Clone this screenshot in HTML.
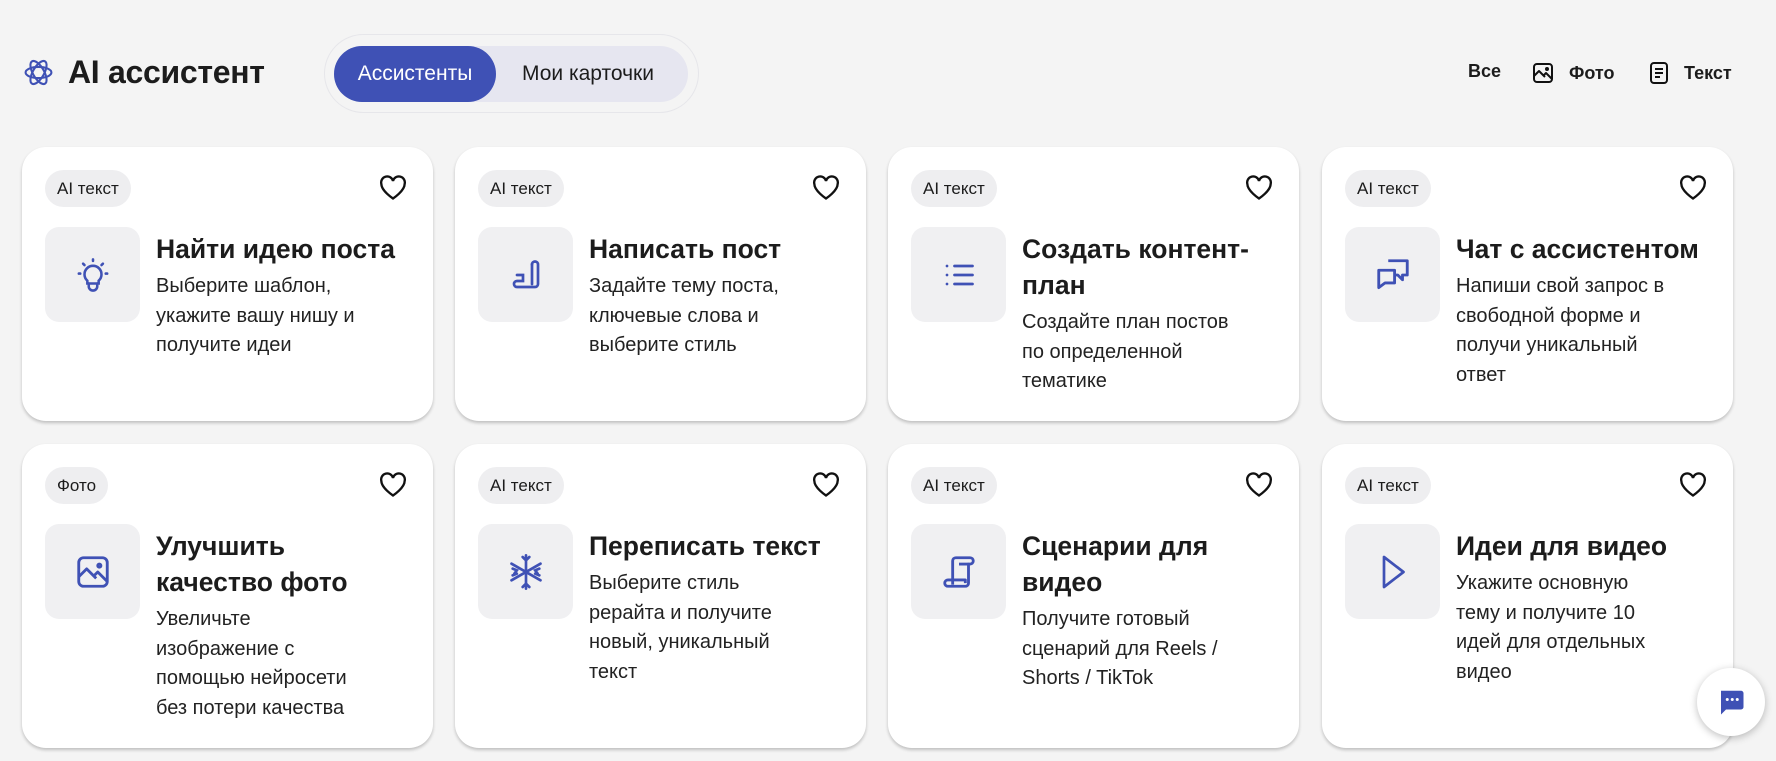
<!DOCTYPE html>
<html><head><meta charset="utf-8"><style>
*{box-sizing:border-box;margin:0;padding:0}
body{width:1776px;height:761px;background:#f4f4f4;font-family:"Liberation Sans",Roboto,sans-serif;color:#1c1c1c;overflow:hidden;position:relative}
.logo{position:absolute;left:23px;top:57px}
.h1{position:absolute;left:68px;top:54px;font-size:32px;font-weight:600;letter-spacing:-0.3px}
.tog{position:absolute;left:324px;top:34px;width:375px;height:79px;border-radius:40px;border:1px solid #e6e6ea;background:#f4f4f4}
.pill{position:absolute;left:334px;top:46px;width:354px;height:56px;border-radius:28px;background:#e6e6f0;font-size:21px}
.pill .a{position:absolute;left:0;top:0;width:162px;height:56px;border-radius:28px;background:#3f51b5;color:#fff;text-align:center;line-height:56px}
.pill .b{position:absolute;left:188px;top:0;line-height:56px;color:#1c1c1c}
.flt{position:absolute;top:61px;font-size:18px;font-weight:700;display:flex;align-items:center}
.card{position:absolute;width:411px;height:274px;background:#fff;border-radius:24px;box-shadow:0 2px 3px rgba(0,0,0,.22)}
.tag{position:absolute;left:23px;top:23px;height:37px;padding:0 12px;border-radius:19px;background:#eeeef0;font-size:17px;line-height:37px}
.heart{position:absolute;right:26px;top:28px}
.ib{position:absolute;left:23px;top:80px;width:95px;height:95px;border-radius:14px;background:#f0f0f2;display:flex;align-items:center;justify-content:center}
.tx{position:absolute;left:134px;top:84px;width:260px}
.tt{font-size:26.5px;font-weight:600;line-height:36px;margin-bottom:5px}
.ds{font-size:20px;line-height:29.5px;color:#222;white-space:nowrap}
.chat{position:absolute;left:1697px;top:668px;width:68px;height:68px;border-radius:50%;background:#fff;box-shadow:0 2px 8px rgba(0,0,0,.25);display:flex;align-items:center;justify-content:center}
</style></head><body>
<svg class="logo" width="31" height="31" viewBox="0 0 24 24" fill="none" stroke="#3f51b5" stroke-width="1.6"><ellipse cx="12" cy="12" rx="10" ry="4.3"/><ellipse cx="12" cy="12" rx="10" ry="4.3" transform="rotate(60 12 12)"/><ellipse cx="12" cy="12" rx="10" ry="4.3" transform="rotate(120 12 12)"/></svg>
<div class="h1">AI ассистент</div>
<div class="tog"></div>
<div class="pill"><div class="a">Ассистенты</div><div class="b">Мои карточки</div></div>
<div class="flt" style="left:1468px">Все</div>
<div class="flt" style="left:1531px"><svg width="24" height="24" viewBox="0 0 24 24" fill="none" stroke="#111" stroke-width="2" stroke-linejoin="round"><rect x="3" y="3" width="18" height="18" rx="3"/><path d="M3 15l5-5 6 6M13 14l2-2 6 6"/><circle cx="16" cy="8" r="1" fill="#111"/></svg><span style="margin-left:14px">Фото</span></div>
<div class="flt" style="left:1648px"><svg width="22" height="24" viewBox="0 0 22 24" fill="none" stroke="#111" stroke-width="2"><rect x="3" y="2" width="16" height="20" rx="3"/><path d="M7 8h8M7 12h8M7 16h5"/></svg><span style="margin-left:14px">Текст</span></div>

<div class="card" style="left:22px;top:147px"><div class="tag">AI текст</div>
<svg class="heart" width="28" height="26" viewBox="0 0 24 22" fill="none" stroke="#111" stroke-width="2"><path d="M12 20S2 13.5 2 7.5A5 5 0 0 1 12 5a5 5 0 0 1 10 2.5C22 13.5 12 20 12 20z"/></svg>
<div class="ib"><svg width="34" height="38" viewBox="0 0 24 26" fill="none" stroke="#3f51b5" stroke-width="1.8" stroke-linecap="round"><path d="M12 2v1M5 5l1 1M19 5l-1 1M2 12h1M21 12h1"/><path d="M8 17a6 6 0 1 1 8 0v2H8z"/><path d="M9 19v2a3 3 0 0 0 6 0v-2"/></svg></div>
<div class="tx"><div class="tt">Найти идею поста</div><div class="ds">Выберите шаблон,<br>укажите вашу нишу и<br>получите идеи</div></div></div>

<div class="card" style="left:455px;top:147px"><div class="tag">AI текст</div>
<svg class="heart" width="28" height="26" viewBox="0 0 24 22" fill="none" stroke="#111" stroke-width="2"><path d="M12 20S2 13.5 2 7.5A5 5 0 0 1 12 5a5 5 0 0 1 10 2.5C22 13.5 12 20 12 20z"/></svg>
<div class="ib"><svg width="36" height="36" viewBox="0 0 24 24" fill="none" stroke="#3f51b5" stroke-width="1.8" stroke-linecap="round"><path d="M16 5a2 2 0 0 1 4 0v13a2 2 0 0 1-2 2H6a2 2 0 0 1 0-4h4v-4H6"/><path d="M16 5v13"/></svg></div>
<div class="tx"><div class="tt">Написать пост</div><div class="ds">Задайте тему поста,<br>ключевые слова и<br>выберите стиль</div></div></div>

<div class="card" style="left:888px;top:147px"><div class="tag">AI текст</div>
<svg class="heart" width="28" height="26" viewBox="0 0 24 22" fill="none" stroke="#111" stroke-width="2"><path d="M12 20S2 13.5 2 7.5A5 5 0 0 1 12 5a5 5 0 0 1 10 2.5C22 13.5 12 20 12 20z"/></svg>
<div class="ib"><svg width="36" height="36" viewBox="0 0 24 24" fill="none" stroke="#3f51b5" stroke-width="1.8" stroke-linecap="round"><path d="M9 6h12M9 12h12M9 18h12"/><path d="M4 6h.01M4 12h.01M4 18h.01"/></svg></div>
<div class="tx"><div class="tt">Создать контент-<br>план</div><div class="ds">Создайте план постов<br>по определенной<br>тематике</div></div></div>

<div class="card" style="left:1322px;top:147px"><div class="tag">AI текст</div>
<svg class="heart" width="28" height="26" viewBox="0 0 24 22" fill="none" stroke="#111" stroke-width="2"><path d="M12 20S2 13.5 2 7.5A5 5 0 0 1 12 5a5 5 0 0 1 10 2.5C22 13.5 12 20 12 20z"/></svg>
<div class="ib"><svg width="38" height="38" viewBox="0 0 24 24" fill="none" stroke="#3f51b5" stroke-width="1.8" stroke-linejoin="round"><path d="M9 3h12v9h-3v3l-3-3h-2"/><path d="M3 9h10v8H7l-4 3z"/></svg></div>
<div class="tx"><div class="tt">Чат с ассистентом</div><div class="ds">Напиши свой запрос в<br>свободной форме и<br>получи уникальный<br>ответ</div></div></div>

<div class="card" style="left:22px;top:444px;height:304px"><div class="tag">Фото</div>
<svg class="heart" width="28" height="26" viewBox="0 0 24 22" fill="none" stroke="#111" stroke-width="2"><path d="M12 20S2 13.5 2 7.5A5 5 0 0 1 12 5a5 5 0 0 1 10 2.5C22 13.5 12 20 12 20z"/></svg>
<div class="ib"><svg width="38" height="38" viewBox="0 0 24 24" fill="none" stroke="#3f51b5" stroke-width="1.8" stroke-linejoin="round"><rect x="3" y="3" width="18" height="18" rx="3"/><path d="M3 15l5-5 6 6M13 14l2-2 6 6"/><circle cx="16" cy="8" r="1"/></svg></div>
<div class="tx"><div class="tt">Улучшить<br>качество фото</div><div class="ds">Увеличьте<br>изображение с<br>помощью нейросети<br>без потери качества</div></div></div>

<div class="card" style="left:455px;top:444px;height:304px"><div class="tag">AI текст</div>
<svg class="heart" width="28" height="26" viewBox="0 0 24 22" fill="none" stroke="#111" stroke-width="2"><path d="M12 20S2 13.5 2 7.5A5 5 0 0 1 12 5a5 5 0 0 1 10 2.5C22 13.5 12 20 12 20z"/></svg>
<div class="ib"><svg width="40" height="40" viewBox="0 0 24 24" fill="none" stroke="#3f51b5" stroke-width="1.6" stroke-linecap="round"><path d="M12 2v20M3.3 7l17.4 10M3.3 17l17.4-10M10 3l2 2 2-2M10 21l2-2 2 2M4 10l2.5 1L5 13M20 10l-2.5 1 1.5 2M4 14l2.5-1M20 14l-2.5-1"/></svg></div>
<div class="tx"><div class="tt">Переписать текст</div><div class="ds">Выберите стиль<br>рерайта и получите<br>новый, уникальный<br>текст</div></div></div>

<div class="card" style="left:888px;top:444px;height:304px"><div class="tag">AI текст</div>
<svg class="heart" width="28" height="26" viewBox="0 0 24 22" fill="none" stroke="#111" stroke-width="2"><path d="M12 20S2 13.5 2 7.5A5 5 0 0 1 12 5a5 5 0 0 1 10 2.5C22 13.5 12 20 12 20z"/></svg>
<div class="ib"><svg width="38" height="38" viewBox="0 0 24 24" fill="none" stroke="#3f51b5" stroke-width="1.8" stroke-linejoin="round"><path d="M8 20V5a2 2 0 0 1 2-2h9a2 2 0 0 1 0 4h-1v12a2 2 0 0 1-2 2H5a2 2 0 0 1 0-4h11v2"/><path d="M18 7H12"/></svg></div>
<div class="tx"><div class="tt">Сценарии для<br>видео</div><div class="ds">Получите готовый<br>сценарий для Reels /<br>Shorts / TikTok</div></div></div>

<div class="card" style="left:1322px;top:444px;height:304px"><div class="tag">AI текст</div>
<svg class="heart" width="28" height="26" viewBox="0 0 24 22" fill="none" stroke="#111" stroke-width="2"><path d="M12 20S2 13.5 2 7.5A5 5 0 0 1 12 5a5 5 0 0 1 10 2.5C22 13.5 12 20 12 20z"/></svg>
<div class="ib"><svg width="36" height="40" viewBox="0 0 24 26" fill="none" stroke="#3f51b5" stroke-width="1.8" stroke-linejoin="round"><path d="M6 3l13 10L6 23z"/></svg></div>
<div class="tx"><div class="tt">Идеи для видео</div><div class="ds">Укажите основную<br>тему и получите 10<br>идей для отдельных<br>видео</div></div></div>

<div class="chat"><svg width="30" height="30" viewBox="0 0 24 24"><path d="M4 3h16a2 2 0 0 1 2 2v11a2 2 0 0 1-2 2H8l-4 4z" fill="#3f51b5"/><circle cx="9" cy="10" r="1.2" fill="#fff"/><circle cx="13" cy="10" r="1.2" fill="#fff"/><circle cx="17" cy="10" r="1.2" fill="#fff"/></svg></div>
</body></html>
